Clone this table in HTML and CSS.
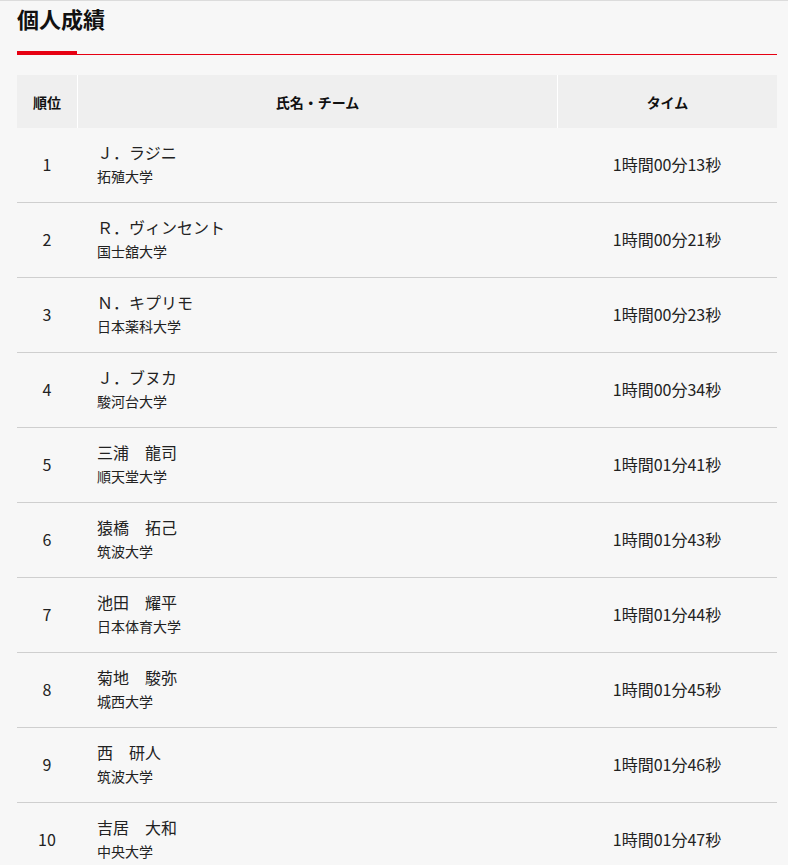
FILE: index.html
```html
<!DOCTYPE html>
<html lang="ja">
<head>
<meta charset="utf-8">
<title>個人成績</title>
<link rel="stylesheet" href="styles.css">
</head>
<body>
<div class="page">
  <h2 class="title">個人成績</h2>
  <div class="rule"><span class="rule-accent"></span><span class="rule-line"></span></div>
  <table class="results">
    <thead>
      <tr>
        <th class="c-rank">順位</th>
        <th class="c-name">氏名・チーム</th>
        <th class="c-time">タイム</th>
      </tr>
    </thead>
    <tbody>
      <tr><td class="c-rank">1</td><td class="c-name"><div class="name">Ｊ．ラジニ</div><div class="team">拓殖大学</div></td><td class="c-time">1時間00分13秒</td></tr>
      <tr><td class="c-rank">2</td><td class="c-name"><div class="name">Ｒ．ヴィンセント</div><div class="team">国士舘大学</div></td><td class="c-time">1時間00分21秒</td></tr>
      <tr><td class="c-rank">3</td><td class="c-name"><div class="name">Ｎ．キプリモ</div><div class="team">日本薬科大学</div></td><td class="c-time">1時間00分23秒</td></tr>
      <tr><td class="c-rank">4</td><td class="c-name"><div class="name">Ｊ．ブヌカ</div><div class="team">駿河台大学</div></td><td class="c-time">1時間00分34秒</td></tr>
      <tr><td class="c-rank">5</td><td class="c-name"><div class="name">三浦　龍司</div><div class="team">順天堂大学</div></td><td class="c-time">1時間01分41秒</td></tr>
      <tr><td class="c-rank">6</td><td class="c-name"><div class="name">猿橋　拓己</div><div class="team">筑波大学</div></td><td class="c-time">1時間01分43秒</td></tr>
      <tr><td class="c-rank">7</td><td class="c-name"><div class="name">池田　耀平</div><div class="team">日本体育大学</div></td><td class="c-time">1時間01分44秒</td></tr>
      <tr><td class="c-rank">8</td><td class="c-name"><div class="name">菊地　駿弥</div><div class="team">城西大学</div></td><td class="c-time">1時間01分45秒</td></tr>
      <tr><td class="c-rank">9</td><td class="c-name"><div class="name">西　研人</div><div class="team">筑波大学</div></td><td class="c-time">1時間01分46秒</td></tr>
      <tr><td class="c-rank">10</td><td class="c-name"><div class="name">吉居　大和</div><div class="team">中央大学</div></td><td class="c-time">1時間01分47秒</td></tr>
    </tbody>
  </table>
</div>
</body>
</html>
```
FILE: styles.css
```css
html, body {
  margin: 0;
  padding: 0;
  background: #f7f7f7;
}
body {
  font-family: "Noto Sans CJK JP", "Noto Sans", sans-serif;
  color: #222;
  border-top: 1px solid #dcdcdc;
}
.page {
  padding: 0 11px 0 17px;
}
.title {
  margin: 0;
  padding-top: 0;
  font-size: 22px;
  line-height: 34px;
  font-weight: bold;
  color: #111;
}
.rule {
  margin-top: 16px;
  height: 4px;
  display: flex;
  align-items: flex-end;
}
.rule-accent {
  width: 60px;
  height: 4px;
  background: #e60012;
}
.rule-line {
  flex: 1;
  height: 1px;
  background: #e60012;
}
.results {
  margin-top: 20px;
  width: 760px;
  border-collapse: separate;
  border-spacing: 0;
  table-layout: fixed;
}
.results th {
  background: #efefef;
  height: 53px;
  padding: 0;
  font-size: 14px;
  font-weight: bold;
  color: #111;
  text-align: center;
  box-sizing: border-box;
}
.results th + th {
  border-left: 1px solid #fff;
}
.results th.c-rank { width: 60px; }
.results th.c-name { width: 480px; }
.results th.c-time { width: 220px; }
.results td {
  height: 75px;
  box-sizing: border-box;
  padding: 0;
  border-bottom: 1px solid #cfcfcf;
  vertical-align: middle;
  font-size: 16px;
  color: #222;
}
.results td.c-rank {
  text-align: center;
  padding-bottom: 2px;
}
.results td.c-name {
  padding-left: 20px;
  text-align: left;
  padding-bottom: 3px;
}
.results td.c-time {
  text-align: center;
  padding-bottom: 2px;
}
.name {
  font-size: 16px;
  line-height: 24px;
  padding-bottom: 1px;
}
.team {
  font-size: 14px;
  line-height: 22px;
}
```
